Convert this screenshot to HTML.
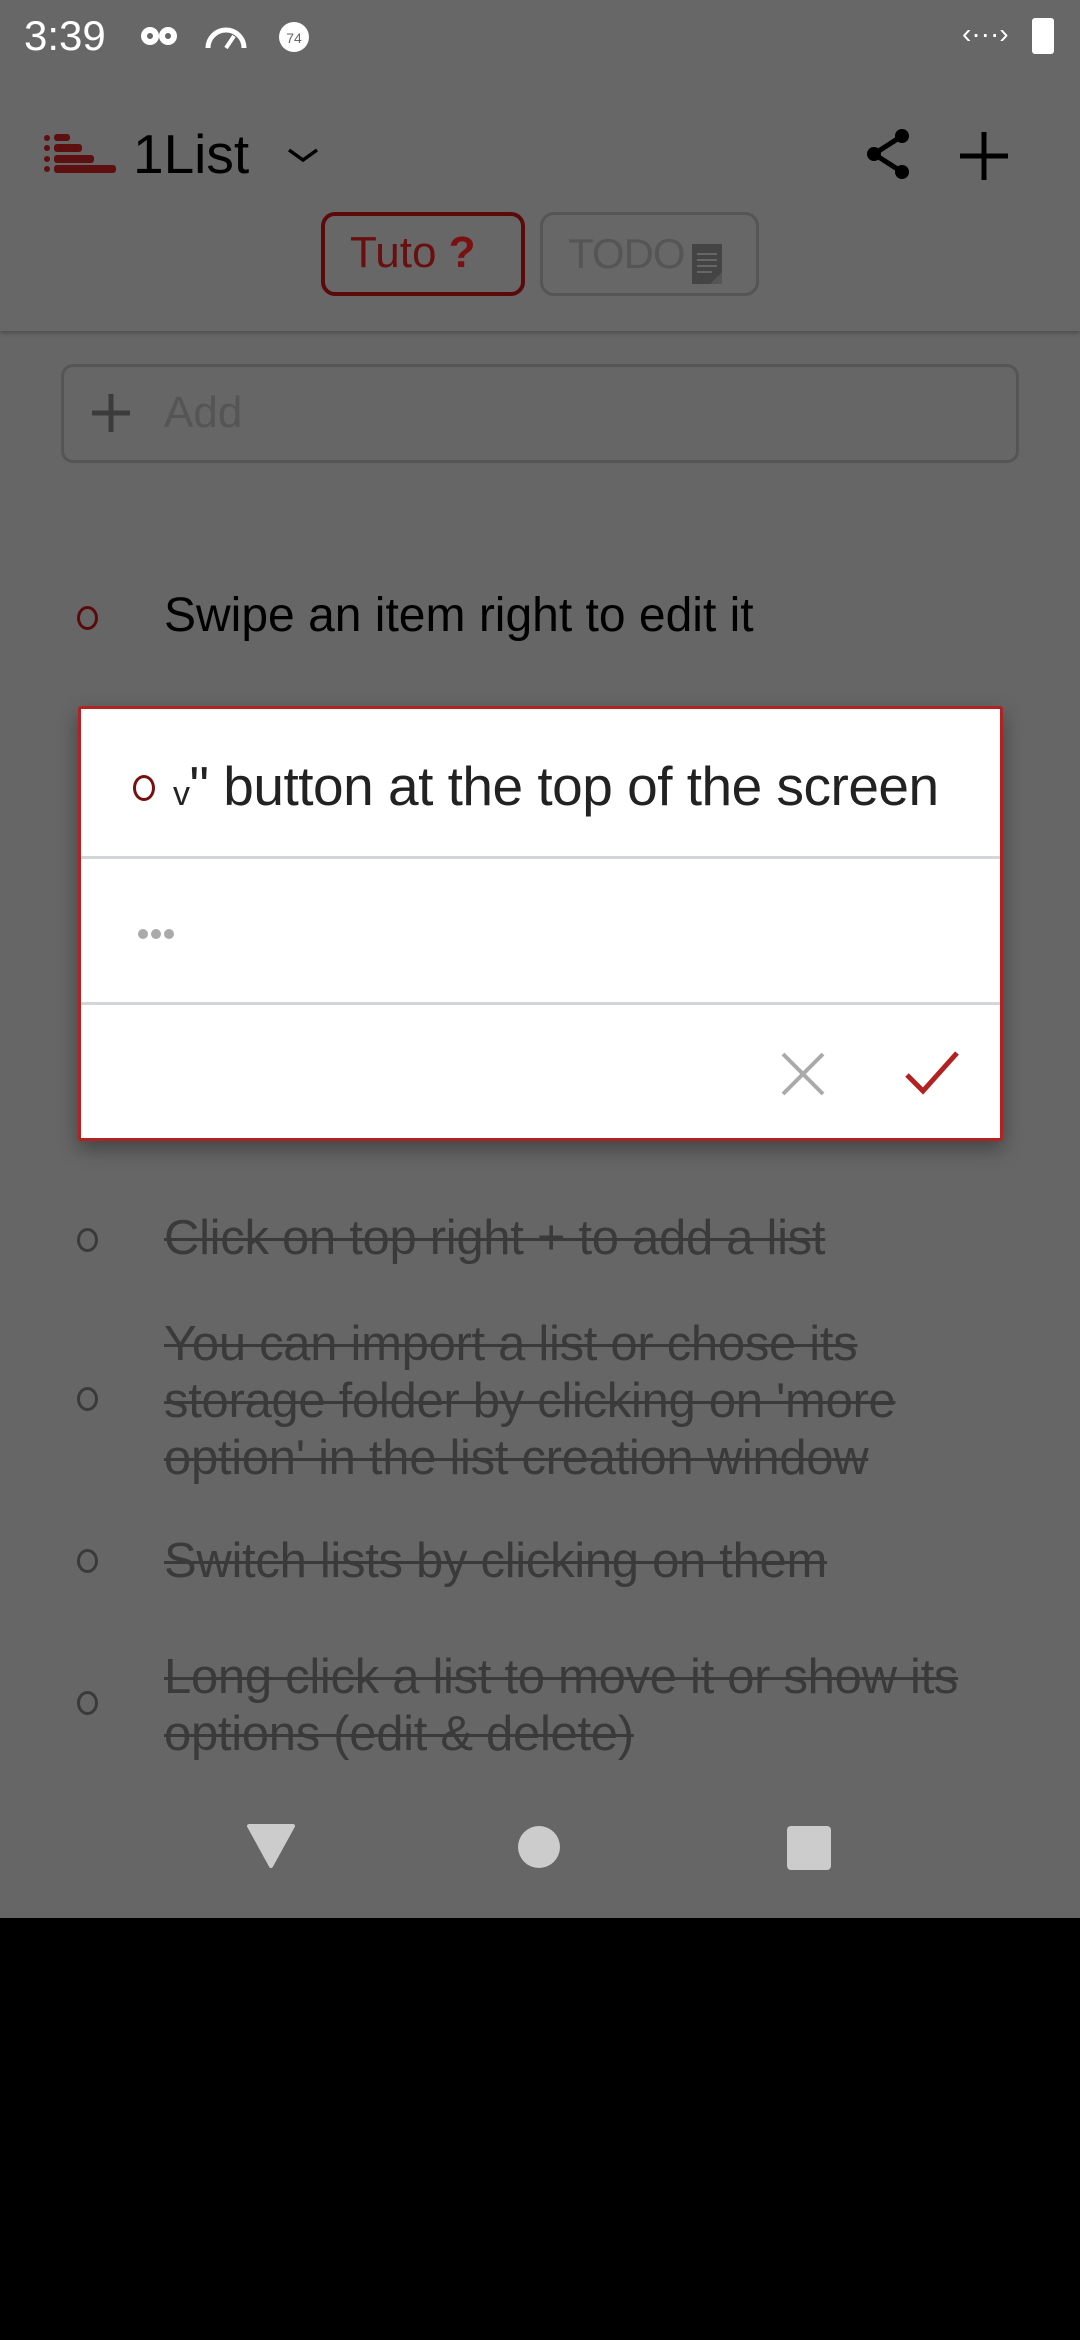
<!DOCTYPE html>
<html><head><meta charset="utf-8"><style>
*{margin:0;padding:0;box-sizing:border-box}
body{width:1080px;height:2340px;background:#000;font-family:"Liberation Sans",sans-serif;position:relative;overflow:hidden}
.scr{position:absolute;left:0;top:0;width:1080px;height:1918px;background:#666}
.hdr{position:absolute;left:0;top:0;width:1080px;height:331px;background:#676767;box-shadow:0 2px 4px rgba(0,0,0,.25)}
.a{position:absolute}
.t{position:absolute;white-space:nowrap}
.ring{position:absolute;width:21px;height:24px;border:3px solid #3a3a3a;border-radius:50%}
.st{position:absolute;left:164px;font-size:49px;color:#3a3a3a;text-decoration:line-through;text-decoration-thickness:3px;line-height:57px;letter-spacing:-0.3px}
</style></head><body>
<div class="scr">
<div class="hdr">
 <div class="t" style="left:24px;top:12px;font-size:42px;color:#fff">3:39</div>
 <svg class="a" style="left:140px;top:20px" width="182" height="34" viewBox="0 0 182 34">
  <circle cx="10" cy="16" r="9" fill="#fff"/><circle cx="28" cy="16" r="9" fill="#fff"/><circle cx="10" cy="16" r="3" fill="#666"/><circle cx="28" cy="16" r="3" fill="#666"/>
  <path d="M68 28 A18 18 0 0 1 104 28" stroke="#fff" stroke-width="5" fill="none"/><path d="M86 28 L94 16" stroke="#fff" stroke-width="4"/>
  <circle cx="154" cy="17" r="15" fill="#fff"/><text x="154" y="23" font-size="14" text-anchor="middle" fill="#666" font-family="Liberation Sans">74</text>
 </svg>
 <div class="t" style="left:962px;top:18px;font-size:28px;color:#fff">‹···›</div>
 <div class="a" style="left:1032px;top:18px;width:22px;height:36px;background:#fff;border-radius:3px"></div>
 <svg class="a" style="left:44px;top:134px" width="74" height="40" viewBox="0 0 74 40">
  <g fill="#5e0f0f"><circle cx="3" cy="4" r="3"/><circle cx="3" cy="14" r="3"/><circle cx="3" cy="25" r="3"/><circle cx="3" cy="35" r="3"/>
  <rect x="10" y="0" width="16" height="7" rx="3"/><rect x="10" y="10" width="28" height="8" rx="3"/><rect x="10" y="21" width="40" height="8" rx="3"/><rect x="10" y="31" width="62" height="8" rx="3"/></g>
 </svg>
 <div class="t" style="left:133px;top:122px;font-size:55px;color:#000">1List</div>
 <svg class="a" style="left:286px;top:146px" width="36" height="20"><path d="M3 4 L17 14 L31 4" stroke="#000" stroke-width="3.5" fill="none"/></svg>
 <svg class="a" style="left:862px;top:128px" width="52" height="52" viewBox="0 0 52 52"><path d="M40 8 L12 26 L40 44" stroke="#000" stroke-width="5" fill="none"/><circle cx="40" cy="8" r="7"/><circle cx="12" cy="26" r="7"/><circle cx="40" cy="44" r="7"/></svg>
 <svg class="a" style="left:958px;top:130px" width="52" height="52"><path d="M26 2 V50 M2 26 H50" stroke="#000" stroke-width="5"/></svg>
 <div class="a" style="left:321px;top:212px;width:204px;height:84px;border:4px solid #5a0a0a;border-radius:14px"></div>
 <div class="t" style="left:350px;top:228px;font-size:44px;color:#6a0f0f">Tuto <span style="color:#7a1010;font-weight:bold">?</span></div>
 <div class="a" style="left:540px;top:212px;width:219px;height:84px;border:3px solid #555;border-radius:14px"></div>
 <div class="t" style="left:568px;top:230px;font-size:42px;color:#555;letter-spacing:-1px">TODO</div>
 <svg class="a" style="left:690px;top:238px" width="34" height="48"><rect x="2" y="6" width="30" height="40" fill="#444"/><g stroke="#666" stroke-width="2"><path d="M7 16H27M7 22H27M7 28H27M7 34H22"/></g><path d="M20 46 L32 34 V46Z" fill="#555"/></svg>
</div>
<div class="a" style="left:61px;top:364px;width:958px;height:99px;border:3px solid #555;border-radius:12px"></div>
<svg class="a" style="left:90px;top:392px" width="42" height="42"><path d="M21 2V40M2 21H40" stroke="#3c3c3c" stroke-width="5"/></svg>
<div class="t" style="left:164px;top:388px;font-size:44px;color:#555">Add</div>

<div class="ring" style="left:77px;top:606px;border-color:#5a0a0a"></div>
<div class="t" style="left:164px;top:588px;font-size:48px;color:#000">Swipe an item right to edit it</div>

<div class="ring" style="left:77px;top:1228px"></div>
<div class="st" style="top:1210px">Click on top right + to add a list</div>
<div class="ring" style="left:77px;top:1387px"></div>
<div class="st" style="top:1316px">You can import a list or chose its<br>storage folder by clicking on 'more<br>option' in the list creation window</div>
<div class="ring" style="left:77px;top:1549px"></div>
<div class="st" style="top:1533px">Switch lists by clicking on them</div>
<div class="ring" style="left:77px;top:1691px"></div>
<div class="st" style="top:1649px">Long click a list to move it or show its<br>options (edit &amp; delete)</div>

<svg class="a" style="left:246px;top:1823px" width="50" height="46"><path d="M3 3 H47 L25 43Z" fill="#ccc" stroke="#ccc" stroke-width="4" stroke-linejoin="round"/></svg>
<div class="a" style="left:518px;top:1826px;width:42px;height:42px;border-radius:50%;background:#ccc"></div>
<div class="a" style="left:787px;top:1826px;width:44px;height:44px;border-radius:4px;background:#ccc"></div>

<div class="a" style="left:78px;top:706px;width:925px;height:435px;background:#fff;border:3px solid #b22222;border-radius:3px;box-shadow:0 8px 20px rgba(0,0,0,.35)">
 <div class="a" style="left:52px;top:66px;width:22px;height:26px;border:3px solid #7a0f0f;border-radius:50%"></div>
 <div class="t" style="left:92px;top:45px;font-size:55px;color:#222;letter-spacing:-0.5px"><span style="font-size:34px">v</span>" button at the top of the screen</div>
 <div class="a" style="left:0;top:147px;width:919px;height:3px;background:#d2d6da"></div>
 <svg class="a" style="left:56px;top:218px" width="40" height="14"><g fill="#aaa"><circle cx="6" cy="7" r="5"/><circle cx="19" cy="7" r="5"/><circle cx="32" cy="7" r="5"/></g></svg>
 <div class="a" style="left:0;top:293px;width:919px;height:3px;background:#d2d6da"></div>
 <svg class="a" style="left:699px;top:342px" width="46" height="46"><path d="M3 3L43 43M43 3L3 43" stroke="#aaa" stroke-width="4"/></svg>
 <svg class="a" style="left:822px;top:340px" width="58" height="46"><path d="M4 26 L20 42 L54 4" stroke="#b22222" stroke-width="5" fill="none"/></svg>
</div>
</div>
</body></html>
